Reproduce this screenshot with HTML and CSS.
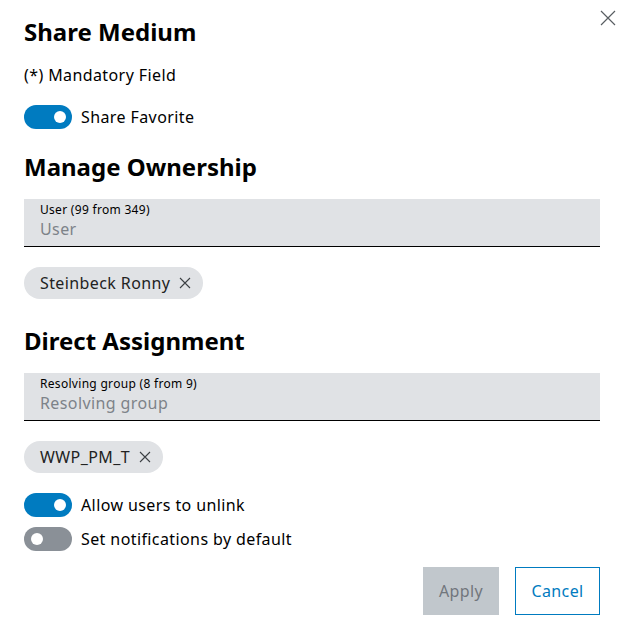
FILE: index.html
```html
<!DOCTYPE html>
<html lang="en">
  <head>
    <meta charset="UTF-8" />
    <meta name="viewport" content="width=device-width, initial-scale=1.0" />
    <title>Share Medium</title>
    <link rel="stylesheet" href="styles.css">
  </head>
  <body>
    <div class="dialog">
      <button class="close-btn" aria-label="Close">
        <svg width="16" height="16" viewBox="0 0 16 16">
          <path d="M1 1 L15 15 M15 1 L1 15" stroke="#595e62" stroke-width="1.2" fill="none" />
        </svg>
      </button>

      <h2 class="title">Share Medium</h2>
      <p class="hint">(*) Mandatory Field</p>

      <label class="toggle-row">
        <span class="toggle on"><span class="knob"></span></span>
        <span>Share Favorite</span>
      </label>

      <h2 class="section">Manage Ownership</h2>
      <div class="field">
        <span class="field-label">User (99 from 349)</span>
        <span class="field-placeholder">User</span>
      </div>
      <div class="chips">
        <span class="chip">Steinbeck Ronny
          <svg class="chip-x" width="12" height="12" viewBox="0 0 12 12">
            <path d="M1 1 L11 11 M11 1 L1 11" stroke="#3c4044" stroke-width="1.1" fill="none" />
          </svg>
        </span>
      </div>

      <h2 class="section">Direct Assignment</h2>
      <div class="field">
        <span class="field-label">Resolving group (8 from 9)</span>
        <span class="field-placeholder">Resolving group</span>
      </div>
      <div class="chips">
        <span class="chip">WWP_PM_T
          <svg class="chip-x" width="12" height="12" viewBox="0 0 12 12">
            <path d="M1 1 L11 11 M11 1 L1 11" stroke="#3c4044" stroke-width="1.1" fill="none" />
          </svg>
        </span>
      </div>

      <div class="toggles">
        <label class="toggle-row">
          <span class="toggle on"><span class="knob"></span></span>
          <span>Allow users to unlink</span>
        </label>
        <label class="toggle-row">
          <span class="toggle off"><span class="knob"></span></span>
          <span>Set notifications by default</span>
        </label>
      </div>

      <div class="actions">
        <button class="btn btn-primary" disabled>Apply</button>
        <button class="btn btn-secondary">Cancel</button>
      </div>
    </div>
  </body>
</html>
```

FILE: styles.css
```css
body {
  margin: 0;
  padding: 0;
  background: #fff;
  font-family: "Noto Sans", Roboto, sans-serif;
  color: #000;
}

.dialog {
  position: relative;
  width: 623px;
  height: 636px;
  box-sizing: border-box;
  padding: 16px 23px 0 24px;
  letter-spacing: 0.4px;
}

.close-btn {
  position: absolute;
  top: 10px;
  left: 600px;
  width: 16px;
  height: 16px;
  padding: 0;
  border: none;
  background: none;
  cursor: pointer;
}

.close-btn svg {
  display: block;
}

h2 {
  margin: 0;
  font-size: 24px;
  line-height: 32px;
  font-weight: 700;
  letter-spacing: 0;
}

.section {
  margin-top: 22px;
}

.chips + .section {
  margin-top: 26px;
}

.hint {
  margin: 15px 0 0 0;
  font-size: 16px;
  line-height: 24px;
}

.toggle-row {
  display: flex;
  align-items: center;
  gap: 9px;
  font-size: 16px;
  line-height: 24px;
}

.hint + .toggle-row {
  margin-top: 18px;
}

.toggle {
  position: relative;
  width: 48px;
  height: 24px;
  border-radius: 12px;
  flex-shrink: 0;
}

.toggle.on {
  background: #007bc0;
}

.toggle.off {
  background: #8a9097;
}

.knob {
  position: absolute;
  top: 6px;
  width: 12px;
  height: 12px;
  border-radius: 50%;
  background: #fff;
}

.toggle.on .knob {
  right: 6px;
}

.toggle.off .knob {
  left: 7px;
}

.field {
  margin-top: 16px;
  height: 47px;
  background: #e0e2e5;
  border-bottom: 1px solid #000;
  padding: 0 16px;
  display: flex;
  flex-direction: column;
}

.field-label {
  margin-top: 4px;
  font-size: 12px;
  line-height: 14px;
  letter-spacing: 0.3px;
}

.field-placeholder {
  font-size: 16px;
  line-height: 24px;
  color: #7d8389;
}

.chips {
  margin-top: 20px;
  display: flex;
}

.chip {
  display: inline-flex;
  align-items: center;
  gap: 9px;
  height: 32px;
  padding: 0 12px 0 16px;
  border-radius: 16px;
  background: #e0e2e5;
  font-size: 16px;
  color: #222;
}

.chip-x {
  display: block;
}

.toggles {
  margin-top: 20px;
  display: flex;
  flex-direction: column;
  gap: 10px;
}

.actions {
  margin-top: 16px;
  display: flex;
  justify-content: flex-end;
  gap: 16px;
}

.btn {
  height: 48px;
  padding: 0;
  font-family: inherit;
  font-size: 16px;
  letter-spacing: 0.4px;
  border-radius: 0;
  cursor: pointer;
}

.btn-primary {
  background: #c1c7cc;
  color: #71767c;
  border: none;
  width: 76px;
}

.btn-secondary {
  background: #fff;
  color: #007bc0;
  border: 1px solid #007bc0;
  width: 85px;
}
```
